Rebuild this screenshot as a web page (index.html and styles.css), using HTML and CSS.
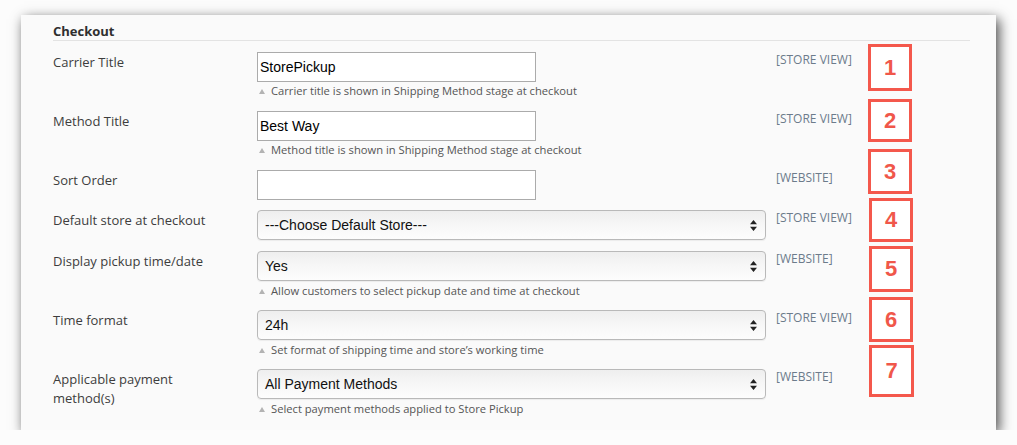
FILE: index.html
```html
<!DOCTYPE html>
<html lang="en">
<head>
<meta charset="utf-8">
<title>Checkout settings</title>
<link rel="stylesheet" href="styles.css">
</head>
<body>
<div class="panel">
  <h2 class="heading">Checkout</h2>
  <div class="form">
    <div class="row">
      <div class="label">Carrier Title</div>
      <div class="control">
        <input class="text" type="text" value="StorePickup">
        <div class="hint"><span class="tri"></span>Carrier title is shown in Shipping Method stage at checkout</div>
      </div>
      <div class="scope">[STORE VIEW]</div>
    </div>
    <div class="row">
      <div class="label">Method Title</div>
      <div class="control">
        <input class="text" type="text" value="Best Way">
        <div class="hint"><span class="tri"></span>Method title is shown in Shipping Method stage at checkout</div>
      </div>
      <div class="scope">[STORE VIEW]</div>
    </div>
    <div class="row">
      <div class="label">Sort Order</div>
      <div class="control">
        <input class="text" type="text" value="">
      </div>
      <div class="scope">[WEBSITE]</div>
    </div>
    <div class="row">
      <div class="label">Default store at checkout</div>
      <div class="control">
        <div class="select"><span>---Choose Default Store---</span><svg class="arrows" width="7" height="11" viewBox="0 0 7 11"><path d="M3.5 0 L7 4.2 L0 4.2 Z M0 6.8 L7 6.8 L3.5 11 Z" fill="#222"/></svg></div>
      </div>
      <div class="scope">[STORE VIEW]</div>
    </div>
    <div class="row">
      <div class="label">Display pickup time/date</div>
      <div class="control">
        <div class="select"><span>Yes</span><svg class="arrows" width="7" height="11" viewBox="0 0 7 11"><path d="M3.5 0 L7 4.2 L0 4.2 Z M0 6.8 L7 6.8 L3.5 11 Z" fill="#222"/></svg></div>
        <div class="hint"><span class="tri"></span>Allow customers to select pickup date and time at checkout</div>
      </div>
      <div class="scope">[WEBSITE]</div>
    </div>
    <div class="row">
      <div class="label">Time format</div>
      <div class="control">
        <div class="select"><span>24h</span><svg class="arrows" width="7" height="11" viewBox="0 0 7 11"><path d="M3.5 0 L7 4.2 L0 4.2 Z M0 6.8 L7 6.8 L3.5 11 Z" fill="#222"/></svg></div>
        <div class="hint"><span class="tri"></span>Set format of shipping time and store’s working time</div>
      </div>
      <div class="scope">[STORE VIEW]</div>
    </div>
    <div class="row">
      <div class="label">Applicable payment method(s)</div>
      <div class="control">
        <div class="select"><span>All Payment Methods</span><svg class="arrows" width="7" height="11" viewBox="0 0 7 11"><path d="M3.5 0 L7 4.2 L0 4.2 Z M0 6.8 L7 6.8 L3.5 11 Z" fill="#222"/></svg></div>
        <div class="hint"><span class="tri"></span>Select payment methods applied to Store Pickup</div>
      </div>
      <div class="scope">[WEBSITE]</div>
    </div>
  </div>

  <div class="mark m1">1</div>
  <div class="mark m2">2</div>
  <div class="mark m3">3</div>
  <div class="mark m4">4</div>
  <div class="mark m5">5</div>
  <div class="mark m6">6</div>
  <div class="mark m7">7</div>
</div>
</body>
</html>
```

FILE: styles.css
```css
html, body {
  margin: 0;
  padding: 0;
  background: #fcfcfc;
}

body {
  padding: 15px 0 0 21px;
  font-family: "Open Sans", "DejaVu Sans", sans-serif;
}

.panel {
  position: relative;
  box-sizing: border-box;
  width: 975px;
  height: 415px;
  background: #fafafa;
  padding: 7px 26px 0 32px;
  box-shadow: 3px 4px 12px rgba(0, 0, 0, 0.72);
}

.heading {
  margin: 0;
  font-size: 13px;
  line-height: 18px;
  font-weight: 700;
  color: #2f2f2f;
  border-bottom: 1px solid #e3e3e3;
}

.form {
  padding-top: 11px;
}

.row {
  display: grid;
  grid-template-columns: 204px 509px auto;
  padding-bottom: 10px;
}

.label {
  max-width: 165px;
  padding-top: 1px;
  font-size: 13px;
  line-height: 19px;
  color: #3d3d3d;
}

.control {
  display: flex;
  flex-direction: column;
  align-items: flex-start;
}

.text {
  box-sizing: border-box;
  width: 279px;
  height: 30px;
  margin: 0;
  padding: 0 0 0 2px;
  border: 1px solid #ababab;
  border-radius: 0;
  background: #fff;
  font-family: "Liberation Sans", Arial, sans-serif;
  font-size: 14px;
  color: #000;
  outline: none;
}

.select {
  box-sizing: border-box;
  width: 509px;
  height: 30px;
  margin-bottom: 1px;
  padding: 0 8px 0 7px;
  display: flex;
  align-items: center;
  justify-content: space-between;
  border: 1px solid #b9b9b9;
  border-radius: 4px;
  background: linear-gradient(#eeeeee, #f6f6f6 45%, #fdfdfd);
  box-shadow: 0 1px 1px rgba(0, 0, 0, 0.06);
  font-family: "Liberation Sans", Arial, sans-serif;
  font-size: 14px;
  color: #111;
}

.arrows {
  display: block;
}

.hint {
  margin-top: 2px;
  padding-bottom: 3px;
  font-size: 11.2px;
  line-height: 14px;
  color: #555;
  display: flex;
  align-items: center;
}

.select + .hint {
  padding-bottom: 2px;
}

.tri {
  width: 0;
  height: 0;
  margin: 0 6px 0 2px;
  border-left: 3px solid transparent;
  border-right: 3px solid transparent;
  border-bottom: 5px solid #b3b3b3;
}

.scope {
  margin-left: 10px;
  font-size: 12px;
  line-height: 16px;
  color: #6c7b8b;
}

.mark {
  position: absolute;
  box-sizing: border-box;
  width: 44px;
  border: 3px solid #f4584c;
  background: #fff;
  display: flex;
  align-items: center;
  justify-content: center;
  font-family: "Liberation Sans", Arial, sans-serif;
  font-weight: 700;
  font-size: 22px;
  color: #f0574a;
}

.m1 { left: 847px; top: 29px; height: 47px; }
.m2 { left: 847px; top: 84px; height: 43px; }
.m3 { left: 847px; top: 134px; height: 45px; }
.m4 { left: 848px; top: 183px; height: 44px; }
.m5 { left: 848px; top: 231px; height: 46px; }
.m6 { left: 848px; top: 282px; height: 45px; }
.m7 { left: 848px; top: 330px; height: 52px; width: 45px; }
```
